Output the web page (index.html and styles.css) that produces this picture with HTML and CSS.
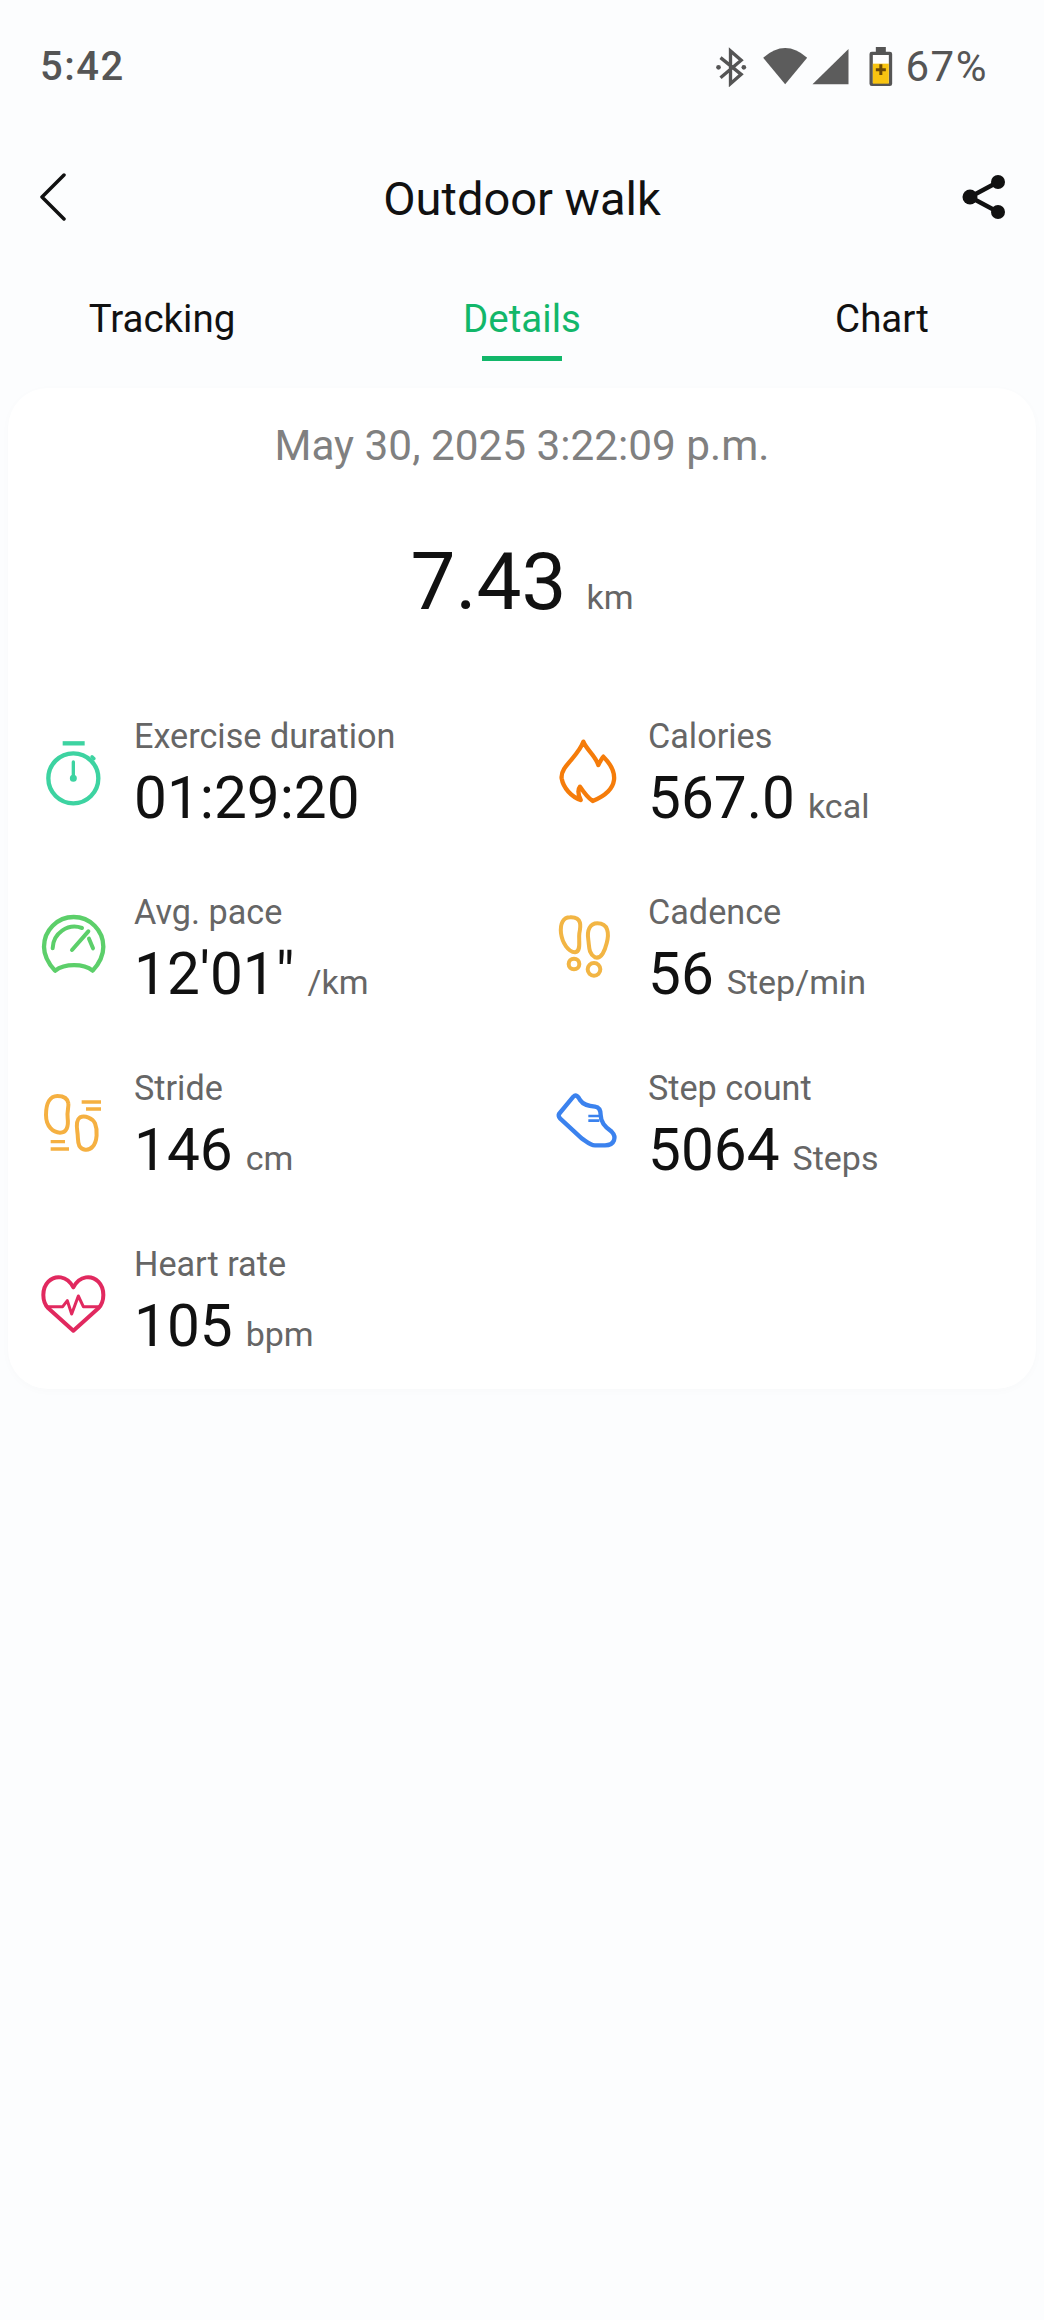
FILE: index.html
```html
<!DOCTYPE html>
<html lang="en">
<head>
<meta charset="UTF-8">
<meta name="viewport" content="width=device-width, initial-scale=1.0">
<title>Outdoor walk</title>
<link rel="stylesheet" href="styles.css">
</head>
<body>

<div class="status-bar">
  <span class="clock">5:42</span>
  <div class="status-right">
    <svg class="status-icons" viewBox="100 72 545 126">
      <!-- bluetooth -->
      <path d="M122 110 L184 160 L152 188 V90 L184 118 L122 170" fill="none" stroke="#555" stroke-width="10"/>
      <circle cx="116" cy="139" r="7" fill="#555"/>
      <circle cx="192" cy="139" r="7" fill="#555"/>
      <!-- wifi -->
      <path d="M316 190 L250 110 Q316 52 382 110 Z" fill="#5c5c5c"/>
      <!-- signal -->
      <path d="M398 190 L506 84 V190 Z" fill="#5c5c5c"/>
      <!-- battery -->
      <path d="M588 78 H618 V92 H630 Q637 92 637 99 V188 Q637 195 630 195 H576 Q569 195 569 188 V99 Q569 92 576 92 H588 Z" fill="#555"/>
      <rect x="579" y="102" width="48" height="84" fill="#fff"/>
      <rect x="579" y="128" width="48" height="60" fill="#f8c411"/>
      <path d="M603 130 V162 M588 146 H618" stroke="#6b4a08" stroke-width="9"/>
    </svg>
    <span class="battery-text">67%</span>
  </div>
</div>

<div class="header">
  <svg class="back" viewBox="0 0 30 48">
    <path d="M26 2 L4 24 L26 46" fill="none" stroke="#111" stroke-width="3.5" stroke-linecap="round" stroke-linejoin="round"/>
  </svg>
  <h1>Outdoor walk</h1>
  <svg class="share" viewBox="0 0 44 46">
    <path d="M36 8 L8 23 L36 38" fill="none" stroke="#111" stroke-width="4.5"/>
    <circle cx="36" cy="8" r="7" fill="#111"/>
    <circle cx="8" cy="23" r="7.5" fill="#111"/>
    <circle cx="36" cy="38" r="7" fill="#111"/>
  </svg>
</div>

<div class="tabs">
  <div class="tab">Tracking</div>
  <div class="tab active">Details<span class="underline"></span></div>
  <div class="tab">Chart</div>
</div>

<div class="card">
  <div class="date">May 30, 2025 3:22:09 p.m.</div>
  <div class="distance">7.43<span class="distance-unit">km</span></div>

  <div class="stats">
    <div class="stat">
      <svg class="stat-icon" viewBox="24 30 270 270" fill="none" stroke="#3dd3a1" stroke-width="13" stroke-linecap="round">
        <circle cx="160" cy="235" r="75"/>
        <path d="M128 130 H194" stroke-linecap="butt"/>
        <path d="M160 186 V235" stroke-width="10"/>
        <circle cx="160" cy="235" r="6" fill="#3dd3a1" stroke-width="9"/>
        <path d="M216 170 L222 176" stroke-width="10"/>
      </svg>
      <div class="stat-text">
        <div class="label">Exercise duration</div>
        <div class="value">01:29:20</div>
      </div>
    </div>

    <div class="stat">
      <svg class="stat-icon" viewBox="6 30 270 270" fill="none" stroke="#f57c0a" stroke-width="13" stroke-linejoin="round">
        <path d="M130 125 C140 150 165 165 175 195 C180 185 185 175 190 170 C210 190 225 215 222 240 C218 270 190 290 158 303 C145 295 130 275 120 260 C112 270 115 285 122 300 C95 290 70 265 65 235 C60 200 115 170 130 125 Z"/>
      </svg>
      <div class="stat-text">
        <div class="label">Calories</div>
        <div class="value">567.0<span class="unit">kcal</span></div>
      </div>
    </div>

    <div class="stat">
      <svg class="stat-icon" viewBox="24 558 270 270" fill="none" stroke="#5ccf6a" stroke-width="13" stroke-linecap="round" stroke-linejoin="round">
        <path d="M105 812 C85 790 72 765 72 740 A89 89 0 0 1 250 740 C250 765 238 790 218 812 C190 790 135 790 105 812 Z"/>
        <path d="M98 745 A66 66 0 0 1 186 684" stroke-width="12"/>
        <path d="M207 716 L219 745" stroke-width="12"/>
        <path d="M156 750 L205 694" stroke-width="12"/>
      </svg>
      <div class="stat-text">
        <div class="label">Avg. pace</div>
        <div class="value">12'01"<span class="unit">/km</span></div>
      </div>
    </div>

    <div class="stat">
      <svg class="stat-icon" viewBox="6 558 270 270" fill="none" stroke="#f2b544" stroke-width="12">
        <path d="M90 652 C70 652 60 670 63 700 C67 730 85 755 105 757 C125 755 115 720 118 700 C122 680 128 650 90 652 Z"/>
        <circle cx="102" cy="792" r="16"/>
        <path d="M172 670 C150 670 140 690 145 720 C148 740 145 760 165 772 C185 778 195 750 200 730 C208 700 205 670 172 670 Z"/>
        <circle cx="162" cy="808" r="19"/>
      </svg>
      <div class="stat-text">
        <div class="label">Cadence</div>
        <div class="value">56<span class="unit">Step/min</span></div>
      </div>
    </div>

    <div class="stat">
      <svg class="stat-icon" viewBox="24 66 270 270" fill="none" stroke="#f5b041" stroke-width="12">
        <path d="M112 168 C90 168 78 190 78 225 C78 260 100 278 120 278 C140 278 146 260 143 235 C140 215 147 200 145 190 C143 175 130 168 112 168 Z"/>
        <path d="M180 232 C168 240 170 262 172 275 C175 295 172 305 178 318 C185 330 205 335 218 320 C232 305 233 270 225 250 C218 235 195 225 180 232 Z"/>
        <path d="M92 327 H147 M92 305 H135 M185 186 H243 M198 207 H243" stroke-width="10"/>
      </svg>
      <div class="stat-text">
        <div class="label">Stride</div>
        <div class="value">146<span class="unit">cm</span></div>
      </div>
    </div>

    <div class="stat">
      <svg class="stat-icon" viewBox="6 66 270 270" fill="none" stroke="#3b82ee" stroke-width="13" stroke-linejoin="round">
        <path d="M57 222 L100 170 C108 162 115 170 120 180 C130 195 145 198 165 200 C178 202 182 212 182 225 C182 250 200 265 215 275 C230 290 225 316 195 316 L165 316 C150 316 140 305 125 295 L60 235 C56 230 55 226 57 222 Z"/>
        <path d="M145 228 H178 M145 242 H178" stroke-width="8"/>
      </svg>
      <div class="stat-text">
        <div class="label">Step count</div>
        <div class="value">5064<span class="unit">Steps</span></div>
      </div>
    </div>

    <div class="stat">
      <svg class="stat-icon" viewBox="24 594 270 270" fill="none" stroke="#e1295f" stroke-width="12" stroke-linejoin="round">
        <path d="M160 872 L85 805 C65 785 65 745 85 725 C105 705 140 705 160 742 C180 705 215 705 235 725 C255 745 255 785 235 805 Z"/>
        <path d="M78 800 H128 L142 782 L155 822 L175 768 L190 800 H242" stroke-width="9"/>
      </svg>
      <div class="stat-text">
        <div class="label">Heart rate</div>
        <div class="value">105<span class="unit">bpm</span></div>
      </div>
    </div>
  </div>
</div>

</body>
</html>
```

FILE: styles.css
```css
body {
  font-family: Roboto, "Liberation Sans", sans-serif;
  margin: 0;
  padding: 0;
  width: 1044px;
  min-height: 2320px;
  background-color: #fcfdfe;
  color: #111;
}

.status-bar {
  height: 132px;
  padding: 0 56px 0 40px;
  display: flex;
  justify-content: space-between;
  align-items: center;
  color: #555;
  font-size: 40px;
}

.clock {
  font-weight: 500;
  letter-spacing: 1.5px;
}

.status-right {
  display: flex;
  align-items: center;
  gap: 11px;
}

.status-icons {
  width: 182px;
  height: 42px;
}

.battery-text {
  font-size: 42px;
  letter-spacing: 1.5px;
}

.header {
  height: 130px;
  padding: 0 38px;
  display: grid;
  grid-template-columns: 1fr auto 1fr;
  align-items: center;
}

.header h1 {
  margin: 2px 0 0;
  font-size: 47px;
  font-weight: 400;
  color: #111;
}

.back {
  width: 30px;
  height: 48px;
}

.share {
  width: 44px;
  height: 46px;
  justify-self: end;
}

.tabs {
  height: 93px;
  padding-top: 33px;
  display: flex;
  justify-content: center;
  gap: 120px;
}

.tab {
  width: 240px;
  display: flex;
  flex-direction: column;
  align-items: center;
  font-size: 38.5px;
  line-height: 48px;
}

.tab.active {
  color: #12b76a;
}

.underline {
  width: 80px;
  height: 5px;
  margin-top: 13px;
  background-color: #12b76a;
}

.card {
  height: 968px;
  margin: 0 8px;
  padding-top: 33px;
  background-color: #fff;
  border-radius: 40px;
  box-shadow: 0 2px 10px rgba(0,0,0,0.02);
}

.date {
  text-align: center;
  font-size: 42.3px;
  line-height: 50px;
  color: #808080;
}

.distance {
  margin-top: 61px;
  text-align: center;
  font-size: 80px;
  line-height: 100px;
  color: #111;
}

.distance-unit {
  margin-left: 20px;
  font-size: 34px;
  line-height: 1;
  color: #666;
}

.stats {
  margin-top: 78px;
  padding-left: 20px;
  display: grid;
  grid-template-columns: 514px 1fr;
  grid-auto-rows: 176px;
}

.stat {
  display: flex;
  gap: 16px;
}

.stat-icon {
  width: 90px;
  height: 90px;
  flex-shrink: 0;
  overflow: visible;
}

.stat-text {
  padding-top: 0;
}

.label {
  font-size: 34.2px;
  line-height: 52px;
  color: #666;
}

.value {
  font-size: 58.5px;
  line-height: 72px;
  color: #111;
}

.unit {
  margin-left: 13px;
  font-size: 34px;
  line-height: 1;
  color: #666;
}
```
